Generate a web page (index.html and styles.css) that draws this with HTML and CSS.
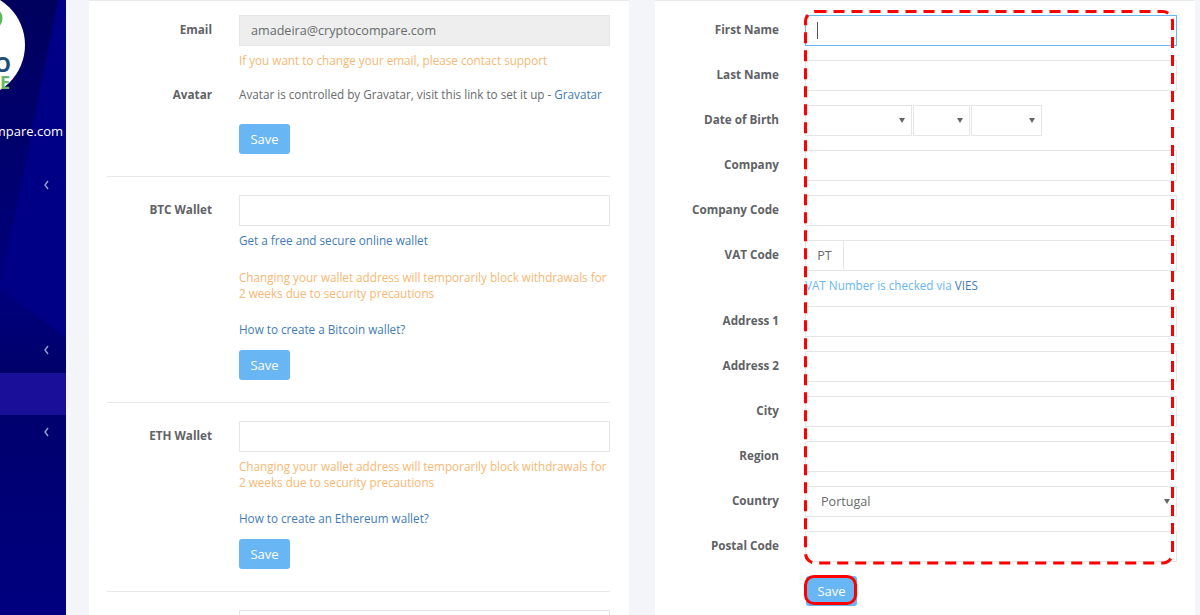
FILE: index.html
```html
<!DOCTYPE html>
<html lang="en">
<head>
<meta charset="utf-8">
<title>Profile</title>
<link rel="stylesheet" href="styles.css">
</head>
<body>
<div class="page">
  <aside class="sidebar">
    <svg class="shade" width="66" height="372" viewBox="0 0 66 372">
      <polygon points="58,0 66,0 66,338 0,288" fill="#000086"/>
    </svg>
    <svg class="logo" width="66" height="110" viewBox="0 0 66 110">
      <circle cx="-28" cy="45" r="53" fill="#fff"/>
      <circle cx="-9" cy="18.5" r="9" fill="none" stroke="#5cb85c" stroke-width="5"/>
      <text class="logo-a" x="11" y="72" text-anchor="end">CRYPTO</text>
      <text class="logo-b" x="10" y="89" text-anchor="end">COMPARE</text>
    </svg>
    <div class="site">cryptocompare.com</div>
    <nav class="nav">
      <div class="nav-item first"><svg class="chev" width="5" height="10" viewBox="0 0 5 10"><path d="M4 1 1 5l3 4"/></svg></div>
      <div class="nav-item second"><svg class="chev" width="5" height="10" viewBox="0 0 5 10"><path d="M4 1 1 5l3 4"/></svg></div>
      <div class="nav-item active"></div>
      <div class="nav-item last"><svg class="chev" width="5" height="10" viewBox="0 0 5 10"><path d="M4 1 1 5l3 4"/></svg></div>
    </nav>
  </aside>

  <main class="content">
    <section class="card card-left">
      <div class="row">
        <label class="label">Email</label>
        <div class="field">
          <div class="input disabled">amadeira@cryptocompare.com</div>
          <p class="note warn gap-s">If you want to change your email, please contact support</p>
        </div>
      </div>
      <div class="row avatar-row">
        <label class="label">Avatar</label>
        <div class="field">
          <p class="note">Avatar is controlled by Gravatar, visit this link to set it up - <a href="#">Gravatar</a></p>
          <button class="btn avatar-save">Save</button>
        </div>
      </div>
      <hr class="rule">
      <div class="row">
        <label class="label">BTC Wallet</label>
        <div class="field">
          <div class="input"></div>
          <p class="note gap-s"><a href="#">Get a free and secure online wallet</a></p>
          <p class="note warn gap-m">Changing your wallet address will temporarily block withdrawals for 2 weeks due to security precautions</p>
          <p class="note gap-l"><a href="#">How to create a Bitcoin wallet?</a></p>
          <button class="btn wallet-save">Save</button>
        </div>
      </div>
      <hr class="rule">
      <div class="row">
        <label class="label">ETH Wallet</label>
        <div class="field">
          <div class="input"></div>
          <p class="note warn gap-s">Changing your wallet address will temporarily block withdrawals for 2 weeks due to security precautions</p>
          <p class="note gap-l"><a href="#">How to create an Ethereum wallet?</a></p>
          <button class="btn wallet-save">Save</button>
        </div>
      </div>
      <hr class="rule">
      <div class="row">
        <label class="label"></label>
        <div class="field"><div class="input"></div></div>
      </div>
    </section>

    <section class="card card-right">
      <div class="form-row"><label class="label">First Name</label><div class="input focus"><span class="caret"></span></div></div>
      <div class="form-row"><label class="label">Last Name</label><div class="input"></div></div>
      <div class="form-row">
        <label class="label">Date of Birth</label>
        <div class="dob">
          <div class="input select w-day"><span class="arrow"></span></div>
          <div class="input select w-month"><span class="arrow"></span></div>
          <div class="input select w-year"><span class="arrow"></span></div>
        </div>
      </div>
      <div class="form-row"><label class="label">Company</label><div class="input"></div></div>
      <div class="form-row"><label class="label">Company Code</label><div class="input"></div></div>
      <div class="form-row vat-row">
        <label class="label">VAT Code</label>
        <div class="input vat"><span class="addon">PT</span></div>
      </div>
      <p class="note info">VAT Number is checked via <a href="#">VIES</a></p>
      <div class="form-row"><label class="label">Address 1</label><div class="input"></div></div>
      <div class="form-row"><label class="label">Address 2</label><div class="input"></div></div>
      <div class="form-row"><label class="label">City</label><div class="input"></div></div>
      <div class="form-row"><label class="label">Region</label><div class="input"></div></div>
      <div class="form-row"><label class="label">Country</label><div class="input select country">Portugal<span class="arrow"></span></div></div>
      <div class="form-row"><label class="label">Postal Code</label><div class="input"></div></div>
      <button class="btn submit">Save</button>
      <svg class="mark-fields" width="371" height="556" viewBox="0 0 371 556">
        <rect x="1.5" y="1.5" width="367" height="551.5" rx="10" fill="none" stroke="#f00" stroke-width="3" stroke-dasharray="11 7"/>
      </svg>
      <div class="mark-save"></div>
    </section>
  </main>
</div>
</body>
</html>
```

FILE: styles.css
```css
* { box-sizing: border-box; }
html, body { margin: 0; height: 100%; overflow: hidden; }
body {
  background: #f3f5f9;
  color: #676a6c;
  font-family: "Open Sans", "Noto Sans", sans-serif;
  font-size: 11.7px;
  line-height: 16px;
}
a { color: #3f7cb5; text-decoration: none; }
.page { display: flex; height: 615px; overflow: hidden; }

/* sidebar */
.sidebar {
  position: relative;
  flex: 0 0 66px;
  overflow: hidden;
  background: linear-gradient(180deg, #00005e 0, #00007c 290px, #000072 340px, #00006a 373px, #00006e 415px, #000080 100%);
}
.shade { position: absolute; left: 0; top: 0; }
.logo { display: block; position: relative; }
.logo-a { font: 700 21px "Open Sans", sans-serif; fill: #1f4e79; }
.logo-b { font: 700 18px "Open Sans", sans-serif; fill: #66bb6a; }
.site {
  position: relative;
  display: flex;
  justify-content: flex-end;
  margin: 13px 3px 0 0;
  color: #fff;
  font-size: 13px;
  line-height: 16px;
  white-space: nowrap;
}
.nav { position: relative; margin-top: 8px; }
.nav-item { height: 42px; position: relative; }
.nav-item.first { margin-top: 26px; }
.nav-item.second { margin-top: 123px; }
.nav-item.active { margin-top: 1px; background: #1a0f99; }
.chev {
  position: absolute;
  left: 44px;
  top: 15px;
  fill: none;
  stroke: #8ea6cc;
  stroke-width: 1.4;
}
.last .chev { top: 12px; }

/* cards */
.content {
  flex: 1;
  display: flex;
  align-items: flex-start;
  gap: 26px;
  padding: 0 5px 0 23px;
  min-width: 0;
}
.card {
  position: relative;
  width: 540px;
  height: 615px;
  flex: none;
  overflow: hidden;
  background: #fff;
  border-top: 1px solid #e7eaee;
  padding-top: 14px;
}
.card-left { padding-left: 18px; padding-right: 19px; }
.card-right { padding-left: 0; }

.row { display: flex; gap: 27px; }
.form-row { display: flex; gap: 26px; margin-bottom: 14px; }
.label {
  flex: 0 0 105px;
  padding-top: 6px;
  text-align: right;
  font-weight: 700;
  color: #5f6266;
}
.form-row .label { flex-basis: 124px; }
.field { flex: 1; min-width: 0; }
.input {
  height: 31px;
  width: 100%;
  padding: 7px 11px 6px;
  border: 1px solid #e5e6e7;
  background: #fff;
  position: relative;
  font-size: 12.6px;
}
.form-row .input { width: 372px; }
.input.disabled { background: #eee; color: #676a6c; }
.input.focus { border-color: #69b6f5; }
.input.country { padding-left: 15px; }
.caret {
  position: absolute;
  left: 11px;
  top: 6px;
  width: 1px;
  height: 17px;
  background: #555;
}
.note { margin: 0; }
.warn { color: #f8ac59; opacity: .85; }
.avatar-row { margin-top: 18px; }
.avatar-row .label { padding-top: 0; }
.gap-s { margin-top: 6px; }
.gap-m { margin-top: 21px; }
.gap-l { margin-top: 20px; }
.btn {
  display: block;
  width: 51px;
  height: 30px;
  padding: 0;
  border: 0;
  border-radius: 3px;
  background: #69b6f5;
  color: #fff;
  font: inherit;
  font-size: 13px;
}
.avatar-save { margin-top: 22px; }
.wallet-save { margin-top: 13px; }
.rule {
  height: 0;
  margin: 22px 0 18px;
  border: 0;
  border-top: 1px solid #e7eaec;
}
.dob { display: flex; gap: 1px; }
.form-row .w-day { width: 107px; }
.form-row .w-month { width: 57px; }
.form-row .w-year { width: 71px; }
.arrow {
  position: absolute;
  right: 6px;
  top: 12px;
  border-left: 3px solid transparent;
  border-right: 3px solid transparent;
  border-top: 5px solid #666;
}
.vat { padding: 0; display: flex; }
.addon {
  width: 38px;
  border-right: 1px solid #e5e6e7;
  text-align: center;
  line-height: 30px;
}
.vat-row { margin-bottom: 6px; }
.info { margin: 0 0 13px 150px; color: #69b6f5; white-space: nowrap; height: 16px; }
.submit { margin: 0 0 0 151px; }
.mark-fields {
  position: absolute;
  left: 149px;
  top: 9px;
}
.mark-save {
  position: absolute;
  left: 149px;
  top: 574px;
  width: 53px;
  height: 30px;
  border: 3px solid #f00;
  border-radius: 10px;
}
```
